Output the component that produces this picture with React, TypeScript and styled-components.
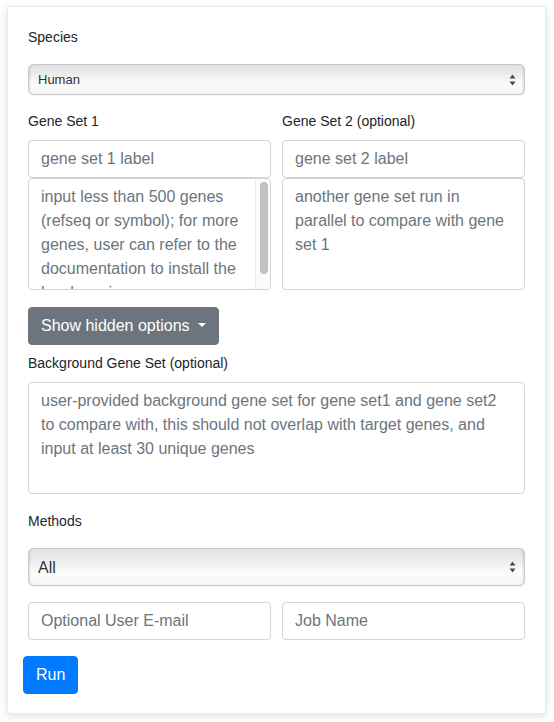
import React from 'react';
import styled, { createGlobalStyle } from 'styled-components';

const GlobalStyle = createGlobalStyle`
  html, body {
    margin: 0;
    background: #fff;
  }
  body {
    font-family: "Liberation Sans", Arial, Helvetica, sans-serif;
    color: #212529;
  }
  * {
    box-sizing: border-box;
  }
`;

const Page = styled.div`
  padding: 6px 8px 8px 7px;
`;

const Card = styled.form`
  width: 539px;
  background: #fff;
  border: 1px solid rgba(0, 0, 0, 0.08);
  border-radius: 4px;
  box-shadow: 0 2px 9px rgba(0, 0, 0, 0.13);
  padding: 20px 20px 19px 20px;
  display: flex;
  flex-direction: column;
`;

const Label = styled.label<{ $gap?: number; $top?: number }>`
  display: block;
  font-size: 14px;
  line-height: 20px;
  color: #212529;
  margin-top: ${({ $top }) => $top ?? 0}px;
  margin-bottom: ${({ $gap }) => $gap ?? 17}px;
`;

const SelectWrap = styled.div<{ $height: number }>`
  position: relative;
  height: ${({ $height }) => $height}px;
`;

const NativeSelect = styled.select<{ $size: number }>`
  appearance: none;
  -webkit-appearance: none;
  width: 100%;
  height: 100%;
  border: 1px solid #c8ccd2;
  border-radius: 5px;
  padding: 0 28px 0 9px;
  font-family: inherit;
  font-size: ${({ $size }) => $size}px;
  color: #333;
  background: linear-gradient(180deg, #e2e2e2 0%, #ececec 30%, #fbfbfb 65%, #f6f6f6 100%);
  box-shadow: inset 2px 0 2px -1px rgba(0, 0, 0, 0.12), inset -2px 0 2px -1px rgba(0, 0, 0, 0.12),
    0 1px 1px rgba(0, 0, 0, 0.05);
  outline: none;
`;

const Arrows = styled.svg`
  position: absolute;
  right: 9px;
  top: 50%;
  transform: translateY(-50%);
  pointer-events: none;
`;

const Pair = styled.div<{ $top?: number }>`
  display: grid;
  grid-template-columns: 1fr 1fr;
  column-gap: 11px;
  margin-top: ${({ $top }) => $top ?? 0}px;
`;

const Column = styled.div`
  display: flex;
  flex-direction: column;
`;

const Input = styled.input`
  display: block;
  width: 100%;
  height: 38px;
  padding: 6px 12px;
  font-family: inherit;
  font-size: 16px;
  line-height: 24px;
  color: #495057;
  background: #fff;
  border: 1px solid #ced4da;
  border-radius: 4px;
  outline: none;

  &::placeholder {
    color: #6c757d;
    opacity: 1;
  }
`;

const AreaBox = styled.div`
  position: relative;
`;

const TextArea = styled.textarea<{ $gutter?: number }>`
  display: block;
  width: 100%;
  height: 112px;
  padding: 6px ${({ $gutter }) => 12 + ($gutter ?? 0)}px 6px 12px;
  font-family: inherit;
  font-size: 16px;
  line-height: 24px;
  color: #495057;
  background: #fff;
  border: 1px solid #ced4da;
  border-radius: 4px;
  resize: none;
  outline: none;
  overflow: hidden;

  &::placeholder {
    color: #6c757d;
    opacity: 1;
  }
`;

const ScrollTrack = styled.div`
  position: absolute;
  top: 1px;
  right: 1px;
  bottom: 1px;
  width: 15px;
  background: #fbfbfb;
  border-left: 1px solid #e8e8e8;
  border-radius: 0 3px 3px 0;
  padding: 3px 3px 0 4px;
  pointer-events: none;
`;

const ScrollThumb = styled.div`
  width: 8px;
  height: 92px;
  border-radius: 4px;
  background: #c1c1c1;
`;

const Button = styled.button<{ $variant: 'secondary' | 'primary'; $top: number }>`
  align-self: flex-start;
  height: 38px;
  margin-top: ${({ $top }) => $top}px;
  margin-left: ${({ $variant }) => ($variant === 'primary' ? '-5px' : '0')};
  padding: 6px 12px;
  font-family: inherit;
  font-size: 16px;
  line-height: 24px;
  color: #fff;
  border: 1px solid ${({ $variant }) => ($variant === 'primary' ? '#007bff' : '#6c757d')};
  background: ${({ $variant }) => ($variant === 'primary' ? '#007bff' : '#6c757d')};
  border-radius: 4px;
  display: inline-flex;
  align-items: center;
`;

const Caret = styled.span`
  display: inline-block;
  margin-left: 8px;
  width: 0;
  height: 0;
  border-top: 4.5px solid #fff;
  border-left: 4.5px solid transparent;
  border-right: 4.5px solid transparent;
  margin-top: -2px;
`;

function UpDown() {
  return (
    <Arrows width="7" height="13" viewBox="0 0 7 13">
      <path d="M3.5 1 L6.5 5 L0.5 5 Z" fill="#4a4a4a" />
      <path d="M3.5 12 L6.5 8 L0.5 8 Z" fill="#4a4a4a" />
    </Arrows>
  );
}

export default function App() {
  return (
    <>
      <GlobalStyle />
      <Page>
        <Card onSubmit={(e) => e.preventDefault()}>
          <Label>Species</Label>
          <SelectWrap $height={31}>
            <NativeSelect $size={13} defaultValue="Human">
              <option>Human</option>
              <option>Mouse</option>
            </NativeSelect>
            <UpDown />
          </SelectWrap>

          <Pair $top={16}>
            <Column>
              <Label $gap={9}>Gene Set 1</Label>
              <Input placeholder="gene set 1 label" />
              <AreaBox>
                <TextArea
                  $gutter={15}
                  placeholder="input less than 500 genes (refseq or symbol); for more genes, user can refer to the documentation to install the local version."
                />
                <ScrollTrack>
                  <ScrollThumb />
                </ScrollTrack>
              </AreaBox>
            </Column>
            <Column>
              <Label $gap={9}>Gene Set 2 (optional)</Label>
              <Input placeholder="gene set 2 label" />
              <TextArea placeholder="another gene set run in parallel to compare with gene set 1" />
            </Column>
          </Pair>

          <Button type="button" $variant="secondary" $top={17}>
            Show hidden options
            <Caret />
          </Button>

          <Label $top={8} $gap={9}>Background Gene Set (optional)</Label>
          <TextArea placeholder="user-provided background gene set for gene set1 and gene set2 to compare with, this should not overlap with target genes, and input at least 30 unique genes" />

          <Label $top={17}>Methods</Label>
          <SelectWrap $height={38}>
            <NativeSelect $size={16} defaultValue="All">
              <option>All</option>
            </NativeSelect>
            <UpDown />
          </SelectWrap>

          <Pair $top={16}>
            <Input placeholder="Optional User E-mail" />
            <Input placeholder="Job Name" />
          </Pair>

          <Button type="submit" $variant="primary" $top={16}>
            Run
          </Button>
        </Card>
      </Page>
    </>
  );
}
